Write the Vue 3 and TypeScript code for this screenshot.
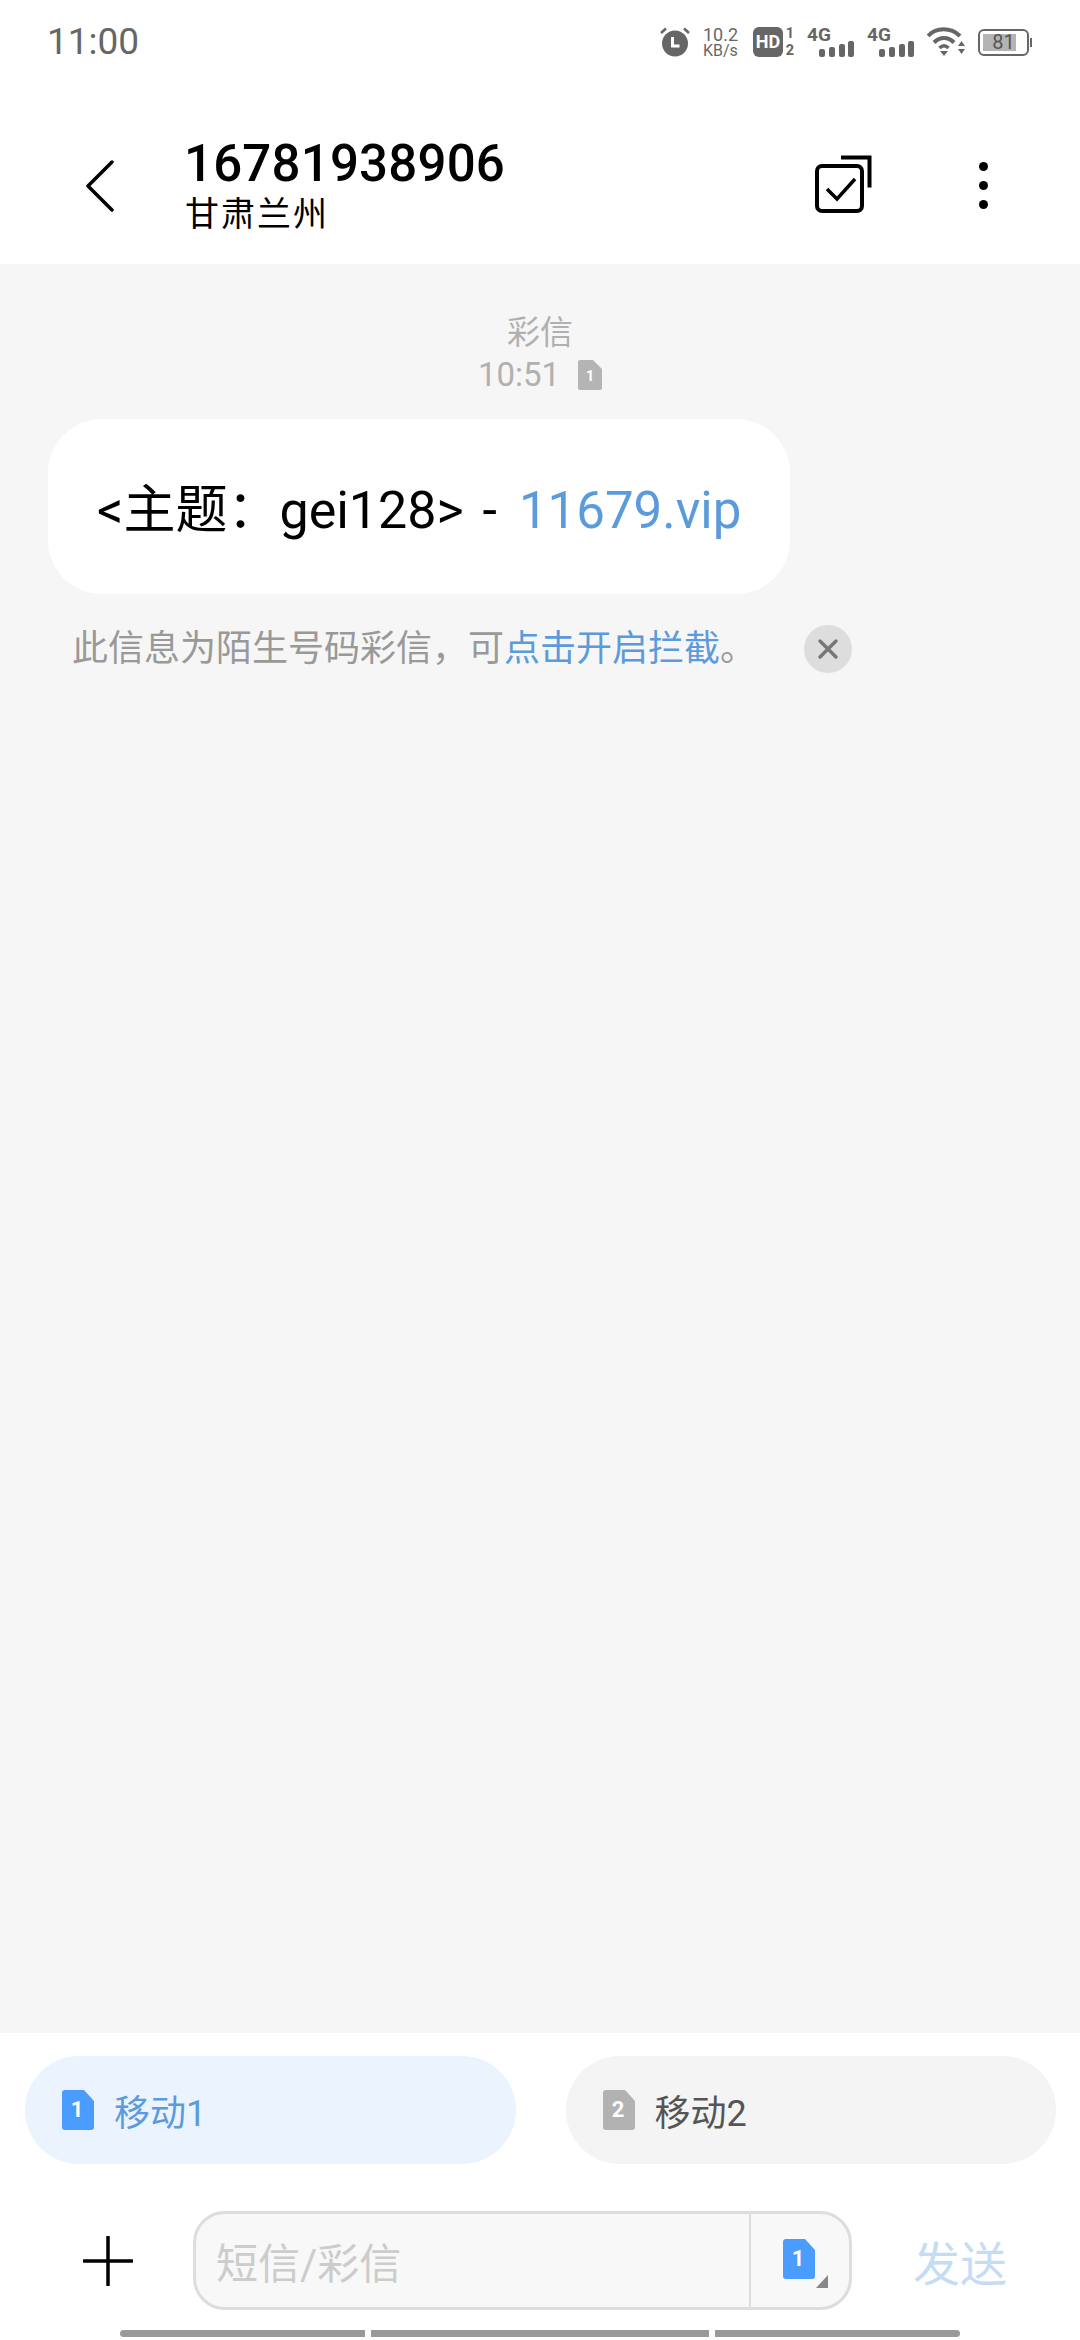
<script setup lang="ts">
interface SimTab {
  id: number;
  label: string;
  active: boolean;
}

const simTabs: SimTab[] = [
  { id: 1, label: '移动1', active: true },
  { id: 2, label: '移动2', active: false },
];

const signalBars = [
  { x: 0, y: 8, h: 8 },
  { x: 10, y: 6, h: 10 },
  { x: 20, y: 3, h: 13 },
  { x: 29, y: 0, h: 16 },
];
</script>

<template>
  <div class="phone">
    <div class="status-bar">
      <span class="clock">11:00</span>
      <div class="status-icons">
        <svg class="alarm" width="30" height="30" viewBox="0 0 30 30">
          <circle cx="15" cy="16.5" r="13" fill="#666" />
          <path d="M12.5 10v9h7" fill="none" stroke="#fff" stroke-width="3" />
          <path d="M1 6l5-4.500M29 6l-5-4.500" stroke="#666" stroke-width="2.500" />
        </svg>
        <div class="speed">
          <span>10.2</span>
          <span class="speed-unit">KB/s</span>
        </div>
        <div class="hd">
          <span class="hd-box">HD</span>
          <span class="hd-nums"><span>1</span><span>2</span></span>
        </div>
        <div v-for="n in 2" :key="n" class="net">
          <span class="net-label">4G</span>
          <svg width="35" height="16" viewBox="0 0 35 16">
            <rect
              v-for="bar in signalBars"
              :key="bar.x"
              :x="bar.x"
              :y="bar.y"
              width="6"
              :height="bar.h"
              rx="2"
              fill="#666"
            />
          </svg>
        </div>
        <svg class="wifi" width="38" height="30" viewBox="0 0 38 30">
          <path d="M1 9C9 0 24 0 33 9" fill="none" stroke="#666" stroke-width="4" />
          <path d="M7 15.500c6-6 14-6 20 0" fill="none" stroke="#666" stroke-width="4" />
          <path d="M12.500 21c3-3 6-3 9 0" fill="none" stroke="#666" stroke-width="3.500" />
          <path d="M13 24h8l-4 5zM31 19l3.500-5 3.500 5zM31 22h7l-3.500 5z" fill="#666" />
        </svg>
        <div class="battery">
          <div class="battery-body">
            <div class="battery-fill"></div>
            <span class="battery-num">81</span>
          </div>
          <span class="battery-tip"></span>
        </div>
      </div>
    </div>

    <header class="top-bar">
      <svg class="back" width="30" height="52" viewBox="0 0 30 52">
        <path d="M27 2L3 26l24 24" fill="none" stroke="#000" stroke-width="3.500" stroke-linecap="round" stroke-linejoin="round" />
      </svg>
      <div class="contact">
        <div class="contact-number">16781938906</div>
        <div class="contact-place">甘肃兰州</div>
      </div>
      <svg class="select-icon" width="58" height="58" viewBox="0 0 58 58">
        <path d="M26 2.500h28.500v30" fill="none" stroke="#000" stroke-width="4" />
        <rect x="2" y="11" width="45" height="45" rx="5" fill="none" stroke="#000" stroke-width="4" />
        <path d="M12 34l10 10 18-20" fill="none" stroke="#000" stroke-width="3.500" />
      </svg>
      <div class="more">
        <span></span>
        <span></span>
        <span></span>
      </div>
    </header>

    <main class="thread">
      <div class="thread-meta">
        <div class="meta-type">彩信</div>
        <div class="meta-time">
          <span>10:51</span>
          <svg width="24" height="30" viewBox="0 0 24 30">
            <path d="M2 0h13l9 9v19a2 2 0 0 1-2 2H2a2 2 0 0 1-2-2V2a2 2 0 0 1 2-2z" fill="#b4b4b4" />
            <text x="12" y="21" text-anchor="middle" class="sim-digit small">1</text>
          </svg>
        </div>
      </div>
      <div class="bubble">&lt;主题：gei128&gt; - <span class="link">11679.vip</span></div>
      <div class="notice">
        <span>此信息为陌生号码彩信，可<span class="notice-link">点击开启拦截</span>。</span>
        <span class="notice-close">
          <svg width="22" height="22" viewBox="0 0 22 22">
            <path d="M3 3l16 16M19 3L3 19" stroke="#777" stroke-width="3.500" stroke-linecap="round" />
          </svg>
        </span>
      </div>
    </main>

    <footer class="composer">
      <div class="sim-tabs">
        <div v-for="tab in simTabs" :key="tab.id" class="sim-tab" :class="{ active: tab.active }">
          <svg width="32" height="40" viewBox="0 0 32 40">
            <path
              d="M3 0h19l10 11v26a3 3 0 0 1-3 3H3a3 3 0 0 1-3-3V3a3 3 0 0 1 3-3z"
              :fill="tab.active ? '#4a9cff' : '#b2b2b2'"
            />
            <text x="15" y="27" text-anchor="middle" class="sim-digit">{{ tab.id }}</text>
          </svg>
          <span>{{ tab.label }}</span>
        </div>
      </div>

      <div class="input-row">
        <svg class="plus" width="50" height="50" viewBox="0 0 50 50">
          <path d="M25 1v48M1 25h48" stroke="#000" stroke-width="3.500" stroke-linecap="round" />
        </svg>
        <div class="input-box">
          <div class="input-text">短信/彩信</div>
          <div class="input-sim">
            <svg width="32" height="40" viewBox="0 0 32 40">
              <path d="M3 0h19l10 11v26a3 3 0 0 1-3 3H3a3 3 0 0 1-3-3V3a3 3 0 0 1 3-3z" fill="#4a9cff" />
              <text x="15" y="27" text-anchor="middle" class="sim-digit">1</text>
            </svg>
            <span class="sim-arrow"></span>
          </div>
        </div>
        <div class="send">发送</div>
      </div>

      <div class="home-bar">
        <span></span>
        <span></span>
        <span></span>
      </div>
    </footer>
  </div>
</template>

<style scoped>
.phone {
  width: 1080px;
  height: 2340px;
  display: flex;
  flex-direction: column;
  background: #f6f6f6;
  font-family: Roboto, "Noto Sans CJK SC", sans-serif;
  overflow: hidden;
}

.status-bar {
  height: 84px;
  flex: none;
  background: #fff;
  display: flex;
  justify-content: space-between;
  align-items: flex-start;
  padding: 22px 48px 0 47px;
  box-sizing: border-box;
  color: #666;
}

.clock {
  font-size: 37px;
  line-height: 40px;
}

.status-icons {
  display: flex;
  align-items: flex-start;
  padding-top: 5px;
}

.speed {
  margin-left: 13px;
  width: 38px;
  display: flex;
  flex-direction: column;
  font-size: 18px;
  line-height: 16px;
  align-items: flex-start;
}

.speed-unit {
  font-size: 16px;
}

.hd {
  margin-left: 12px;
  margin-top: -2px;
  display: flex;
  align-items: center;
}

.hd-box {
  width: 30px;
  height: 30px;
  border-radius: 6px;
  background: #666;
  color: #fff;
  font-size: 18px;
  font-weight: 700;
  line-height: 30px;
  text-align: center;
}

.hd-nums {
  width: 10px;
  margin-left: 2px;
  display: flex;
  flex-direction: column;
  align-items: center;
  font-size: 14.500px;
  font-weight: 700;
  line-height: 17px;
}

.net {
  margin-left: 12px;
  width: 47px;
  display: flex;
  flex-direction: column;
  align-items: flex-start;
  margin-right: 13px;
}

.net + .net {
  margin-left: 0;
  margin-right: 0;
}

.net-label {
  font-size: 19px;
  font-weight: 700;
  line-height: 16px;
}

.net svg {
  margin-left: 12px;
  margin-top: -2px;
}

.wifi {
  margin-left: 13px;
}

.battery {
  margin-left: 13px;
  display: flex;
  align-items: center;
  padding-top: 2px;
}

.battery-body {
  position: relative;
  width: 51px;
  height: 27px;
  box-sizing: border-box;
  border: 2.500px solid #666;
  border-radius: 6px;
  padding: 3px;
  text-align: center;
}

.battery-fill {
  width: 81%;
  height: 100%;
  background: #b4b4b4;
}

.battery-num {
  position: absolute;
  inset: 0;
  font-size: 20px;
  line-height: 22px;
  color: #555;
}

.battery-tip {
  width: 2px;
  height: 9px;
  margin-left: 1px;
  background: #666;
}

.top-bar {
  height: 180px;
  flex: none;
  background: #fff;
  display: flex;
  align-items: center;
  padding: 24px 92px 0 85px;
  box-sizing: border-box;
}

.back {
  flex: none;
}

.contact {
  flex: 1;
  margin-left: 69px;
  color: #000;
}

.contact-number {
  font-size: 51px;
  line-height: 56px;
  font-weight: 500;
  letter-spacing: 0.200px;
}

.contact-place {
  font-size: 34px;
  line-height: 44px;
  margin-left: 1px;
  letter-spacing: 2px;
}

.select-icon {
  flex: none;
  margin-top: -4px;
  margin-right: 15px;
}

.more {
  flex: none;
  margin-left: 91px;
  display: flex;
  flex-direction: column;
  gap: 10px;
  margin-top: -2px;
}

.more span {
  width: 9px;
  height: 9px;
  border-radius: 50%;
  background: #000;
}

.thread {
  flex: 1;
  min-height: 0;
  padding: 49px 0 0 48px;
}

.thread-meta {
  width: 984px;
  display: flex;
  flex-direction: column;
  align-items: center;
  color: #b0b0b0;
}

.meta-type {
  font-size: 33px;
  line-height: 40px;
}

.meta-time {
  display: flex;
  align-items: center;
  gap: 18px;
  font-size: 33px;
  line-height: 44px;
}

.bubble {
  margin-top: 22px;
  width: 742px;
  height: 175px;
  box-sizing: border-box;
  border-radius: 54px;
  background: #fff;
  color: #000;
  font-size: 52px;
  line-height: 184px;
  word-spacing: 6px;
  padding-left: 49px;
  white-space: nowrap;
}

.link {
  color: #5b9bdc;
  font-size: 51px;
  margin-left: 3px;
}

.notice {
  margin-top: 31px;
  padding-left: 24px;
  width: 804px;
  box-sizing: border-box;
  display: flex;
  justify-content: space-between;
  align-items: center;
  font-size: 36px;
  line-height: 48px;
  color: #999;
}

.notice-link {
  color: #5b9bdc;
}

.notice-close {
  width: 48px;
  height: 48px;
  border-radius: 50%;
  background: #ddd;
  display: flex;
  align-items: center;
  justify-content: center;
}

.composer {
  height: 307px;
  flex: none;
  background: #fff;
  box-sizing: border-box;
  padding-top: 23px;
}

.sim-tabs {
  display: flex;
  gap: 50px;
  padding: 0 24px 0 25px;
}

.sim-tab {
  flex: 1;
  height: 108px;
  border-radius: 54px;
  background: #f4f4f4;
  display: flex;
  align-items: center;
  gap: 20px;
  padding-left: 37px;
  font-size: 36px;
  color: #555;
}

.sim-tab.active {
  background: #ebf4fe;
  color: #5b9bdc;
}

.sim-digit {
  fill: #fff;
  font-size: 22px;
  font-weight: 700;
}

.sim-digit.small {
  font-size: 15px;
}

.input-row {
  margin-top: 47px;
  display: flex;
  align-items: center;
  padding-left: 83px;
}

.plus {
  flex: none;
}

.input-box {
  margin-left: 60px;
  width: 659px;
  height: 99px;
  box-sizing: border-box;
  border: 3px solid #ddd;
  border-radius: 32px;
  background: #f8f8f8;
  display: flex;
  align-items: stretch;
}

.input-text {
  flex: 1;
  padding-left: 20px;
  font-size: 42px;
  line-height: 101px;
  color: #ccc;
}

.input-sim {
  position: relative;
  width: 100px;
  box-sizing: border-box;
  border-left: 2px solid #ddd;
  padding: 25px 0 0 32px;
}

.sim-arrow {
  position: absolute;
  right: 21px;
  bottom: 19px;
  width: 0;
  height: 0;
  border-style: solid;
  border-width: 0 0 13px 12px;
  border-color: transparent transparent #888 transparent;
}

.send {
  margin-left: 61px;
  font-size: 47px;
  color: #c5dcf5;
}

.home-bar {
  margin-top: 20px;
  padding-left: 120px;
  display: flex;
  gap: 6px;
}

.home-bar span {
  height: 7px;
  background: #999;
}

.home-bar span:nth-child(1) {
  width: 245px;
  border-radius: 4px 0 0 4px;
}

.home-bar span:nth-child(2) {
  width: 338px;
}

.home-bar span:nth-child(3) {
  width: 245px;
  border-radius: 0 4px 4px 0;
}
</style>

<style>
html,
body {
  margin: 0;
  background: #fff;
}
</style>
